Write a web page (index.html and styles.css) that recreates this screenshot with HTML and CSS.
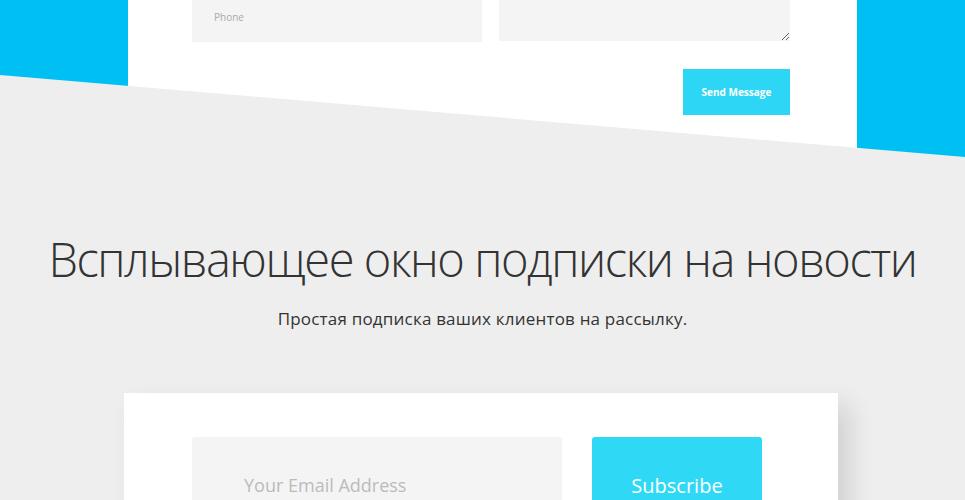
FILE: index.html
```html
<!DOCTYPE html>
<html lang="ru">

<head>
    <meta charset="UTF-8">
    <meta name="viewport" content="width=device-width, initial-scale=1.0">
    <title>Newsletter Popup</title>
    <link rel="stylesheet" href="styles.css">
</head>

<body>

    <div class="contact-band">
        <div class="contact-card">
            <div class="contact-row">
                <input type="text" class="field" placeholder="Phone">
                <textarea class="field field-area"></textarea>
            </div>
            <div class="contact-actions">
                <button class="send-btn">Send Message</button>
            </div>
        </div>
        <div class="slant"></div>
    </div>

    <div class="newsletter">
        <h1>Всплывающее окно подписки на новости</h1>
        <p class="lead">Простая подписка ваших клиентов на рассылку.</p>

        <div class="subscribe-card">
            <form class="subscribe-form">
                <input type="email" class="email" placeholder="Your Email Address">
                <button type="button" class="subscribe-btn">Subscribe</button>
            </form>
        </div>
    </div>

</body>

</html>
```

FILE: styles.css
```css
body {
    margin: 0;
    background-color: #eeeeee;
    font-family: "Open Sans", Arial, sans-serif;
    overflow: hidden;
}

.contact-band {
    position: relative;
    height: 157px;
    background-color: #00c0f3;
    display: flex;
}

.contact-card {
    background-color: white;
    width: 729px;
    margin-left: 128px;
    padding: 0 67px 0 64px;
    box-sizing: border-box;
}

.contact-row {
    display: flex;
    gap: 17px;
}

.field {
    width: 290px;
    height: 42px;
    margin: 0;
    border: none;
    background-color: #f4f4f4;
    box-sizing: border-box;
    padding: 0 22px 8px;
    font-family: inherit;
    font-size: 10px;
    color: #555;
    outline: none;
}

.field::placeholder {
    color: #aaaaaa;
}

.field-area {
    width: 291px;
    height: 41px;
    padding: 0;
    resize: vertical;
}

.contact-actions {
    display: flex;
    justify-content: flex-end;
    margin-top: 27px;
}

.send-btn {
    width: 107px;
    height: 46px;
    border: none;
    background-color: #2ed6f5;
    color: white;
    font-family: inherit;
    font-size: 10px;
    font-weight: 700;
    cursor: pointer;
}

/* grey slanted edge cutting across the contact band */
.slant {
    position: absolute;
    inset: 0;
    background-color: #eeeeee;
    clip-path: polygon(0 75px, 100% 100%, 0 100%);
}

.newsletter {
    text-align: center;
    padding-top: 72px;
}

h1 {
    margin: 0;
    font-size: 47px;
    font-weight: 300;
    color: #333333;
    line-height: 60px;
    letter-spacing: -1.45px;
}

.lead {
    margin: 18px 0 0;
    font-size: 17px;
    color: #333333;
    letter-spacing: 0.2px;
}

.subscribe-card {
    width: 714px;
    margin: 63px 0 0 124px;
    background-color: white;
    box-shadow: 12px 12px 24px rgba(0, 0, 0, 0.12);
    padding: 44px 76px 40px 68px;
    box-sizing: border-box;
}

.subscribe-form {
    display: flex;
    gap: 30px;
}

.email {
    width: 370px;
    height: 96px;
    border: none;
    border-radius: 3px;
    background-color: #f4f4f4;
    padding: 0 0 0 52px;
    box-sizing: border-box;
    font-family: inherit;
    font-size: 18px;
    outline: none;
}

.email::placeholder {
    color: #bbbbbb;
}

.subscribe-btn {
    width: 170px;
    height: 96px;
    border: none;
    border-radius: 3px;
    background-color: #2fd9f6;
    color: white;
    font-family: inherit;
    font-size: 20px;
    cursor: pointer;
}
```
